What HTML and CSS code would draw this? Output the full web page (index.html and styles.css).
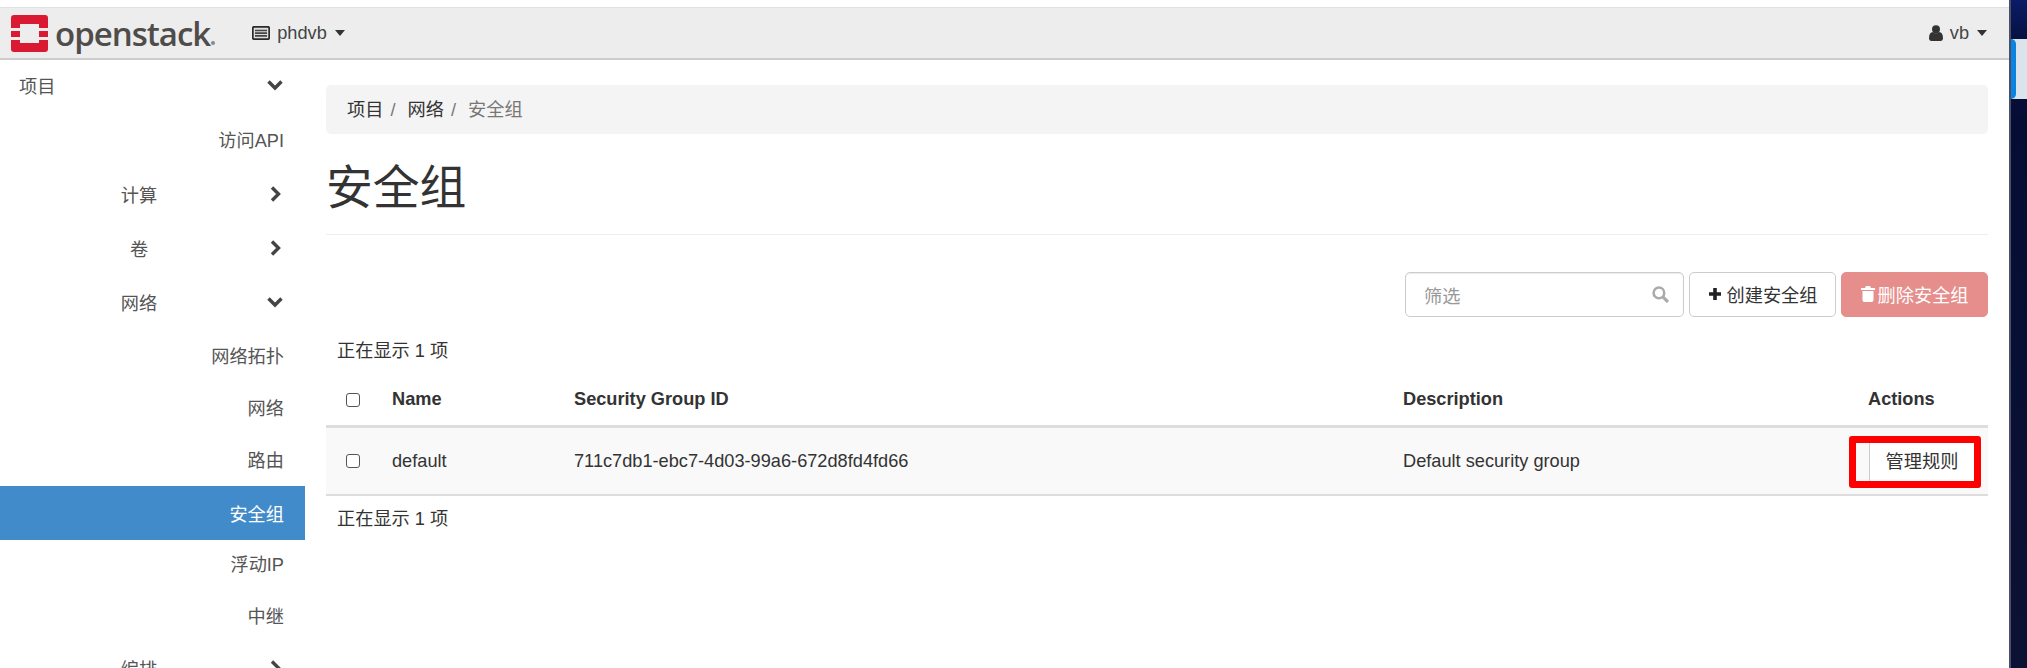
FILE: index.html
```html
<!DOCTYPE html>
<html lang="zh-CN">
<head>
    <meta charset="UTF-8">
    <meta name="viewport" content="width=device-width, initial-scale=1.0">
    <title>安全组 - OpenStack</title>
    <link rel="stylesheet" href="styles.css">
</head>
<body>

    <div class="window">
        <!-- Barra superior -->
        <header class="navbar">
            <a class="brand">
                <svg class="brand-mark" viewBox="0 0 37 37">
                    <path fill="#da1a32" d="M3 0h31a3 3 0 0 1 3 3v10H28V9H9v4H0V3a3 3 0 0 1 3-3zM0 16h9v6H0zM28 16h9v6H28zM0 25h9v3h19v-3h9v9a3 3 0 0 1-3 3H3a3 3 0 0 1-3-3z"/>
                </svg>
                <span class="brand-name">openstack</span><span class="brand-dot"></span>
            </a>
            <a class="project-menu">
                <svg class="project-icon" viewBox="0 0 18 14">
                    <rect x="0.8" y="0.8" width="16.4" height="12.4" rx="1.5" fill="#ddd" stroke="#2b2b2b" stroke-width="1.8"/>
                    <path d="M3 4.500h12M3 7.200h12M3 9.900h12" stroke="#444" stroke-width="1.700"/>
                </svg>
                phdvb<span class="caret"></span>
            </a>
            <a class="user-menu">
                <svg class="user-icon" viewBox="0 0 14 16">
                    <circle cx="7" cy="4.200" r="4" fill="#333"/>
                    <path fill="#333" d="M0 13c0-4 1.500-6 4-6 1 .8 2 1.200 3 1.200s2-.4 3-1.200c2.500 0 4 2 4 6 0 2-1 3-2.500 3h-9C1 16 0 15 0 13z"/>
                </svg>
                vb<span class="caret"></span>
            </a>
        </header>

        <div class="layout">
            <!-- Menu lateral -->
            <nav class="sidebar">
                <a class="nav-group nav-top"><span class="nav-label">项目</span>
                    <svg class="chevron" viewBox="0 0 18 12"><path d="M2.500 2.500 9 9l6.500-6.500" /></svg>
                </a>
                <a class="nav-item nav-first">访问API</a>
                <a class="nav-group"><span class="nav-label">计算</span>
                    <svg class="chevron" viewBox="0 0 18 18"><path d="M6 2.500 12.500 9 6 15.500" /></svg>
                </a>
                <a class="nav-group"><span class="nav-label">卷</span>
                    <svg class="chevron" viewBox="0 0 18 18"><path d="M6 2.500 12.500 9 6 15.500" /></svg>
                </a>
                <a class="nav-group"><span class="nav-label">网络</span>
                    <svg class="chevron" viewBox="0 0 18 12"><path d="M2.500 2.500 9 9l6.500-6.500" /></svg>
                </a>
                <a class="nav-item">网络拓扑</a>
                <a class="nav-item">网络</a>
                <a class="nav-item">路由</a>
                <a class="nav-item active">安全组</a>
                <a class="nav-item">浮动IP</a>
                <a class="nav-item">中继</a>
                <a class="nav-group nav-last"><span class="nav-label">编排</span>
                    <svg class="chevron" viewBox="0 0 18 18"><path d="M6 2.500 12.500 9 6 15.500" /></svg>
                </a>
            </nav>

            <main class="content">
                <div class="breadcrumb">
                    <a>项目</a><span class="sep">/</span>
                    <a>网络</a><span class="sep">/</span>
                    <span class="current">安全组</span>
                </div>

                <div class="page-header">
                    <h1>安全组</h1>
                </div>

                <div class="toolbar">
                    <div class="filter">
                        <span class="filter-text">筛选</span>
                        <svg class="search-icon" viewBox="0 0 16 16">
                            <circle cx="6.500" cy="6.500" r="5" fill="none" stroke="#aaa" stroke-width="2.400"/>
                            <path d="M10.500 10.500 15 15" stroke="#aaa" stroke-width="3"/>
                        </svg>
                    </div>
                    <button class="btn">
                        <svg class="plus-icon" viewBox="0 0 14 14"><path d="M7 1v12M1 7h12" stroke="#222" stroke-width="3.600"/></svg>
                        创建安全组
                    </button>
                    <button class="btn btn-danger">
                        <svg class="trash-icon" viewBox="0 0 14 16">
                            <path fill="#fff" d="M5 0h4l1 2h4v2H0V2h4zM1.500 5h11v9a2 2 0 0 1-2 2h-7a2 2 0 0 1-2-2z"/>
                        </svg>
                        删除安全组
                    </button>
                </div>

                <div class="summary summary-top">正在显示 1 项</div>

                <table class="groups">
                    <colgroup>
                        <col class="col-check">
                        <col class="col-name">
                        <col class="col-id">
                        <col class="col-desc">
                        <col class="col-actions">
                    </colgroup>
                    <thead>
                        <tr>
                            <th class="check-cell"><span class="checkbox"></span></th>
                            <th>Name</th>
                            <th>Security Group ID</th>
                            <th>Description</th>
                            <th>Actions</th>
                        </tr>
                    </thead>
                    <tbody>
                        <tr>
                            <td class="check-cell"><span class="checkbox"></span></td>
                            <td>default</td>
                            <td>711c7db1-ebc7-4d03-99a6-672d8fd4fd66</td>
                            <td>Default security group</td>
                            <td class="actions-cell">
                                <button class="btn btn-rules">管理规则</button>
                                <span class="highlight"></span>
                            </td>
                        </tr>
                    </tbody>
                </table>

                <div class="summary">正在显示 1 项</div>
            </main>
        </div>
    </div>

    <!-- Fundo da área de trabalho -->
    <aside class="desktop">
        <div class="desktop-panel"><span class="panel-tab"></span></div>
    </aside>

</body>
</html>
```

FILE: styles.css
```css
html, body {
    height: 100%;
}
body {
    margin: 0;
    display: flex;
    height: 668px;
    overflow: hidden;
    background-color: #fff;
    color: #333;
    font-family: "Liberation Sans", "Noto Sans CJK SC", sans-serif;
    font-size: 18.2px;
}
.window {
    flex: 1;
    min-width: 0;
    padding-top: 7px;
    overflow: hidden;
}

/* navbar */
.navbar {
    display: flex;
    align-items: center;
    height: 50px;
    background-color: #ededed;
    border-top: 1px solid #e2e2e2;
    border-bottom: 2px solid #ccc;
    color: #444;
}
.brand {
    display: flex;
    align-items: center;
    padding-left: 11px;
}
.brand-mark {
    width: 37px;
    height: 37px;
}
.brand-name {
    margin-left: 7px;
    font-family: "Open Sans", sans-serif;
    font-size: 33px;
    font-weight: 600;
    letter-spacing: -1px;
    color: #4f4c4a;
    line-height: 37px;
}
.brand-dot {
    width: 4px;
    height: 4px;
    margin: 20px 0 0 1px;
    border-radius: 50%;
    background-color: #888;
}
.project-menu {
    display: flex;
    align-items: center;
    margin-left: 37px;
}
.project-icon {
    width: 18px;
    height: 14px;
    margin-right: 7px;
}
.user-menu {
    display: flex;
    align-items: center;
    margin-left: auto;
    padding-right: 22px;
}
.user-icon {
    width: 14px;
    height: 16px;
    margin-right: 7px;
}
.caret {
    width: 0;
    height: 0;
    margin-left: 8px;
    border-top: 6px solid #333;
    border-left: 5.500px solid transparent;
    border-right: 5.500px solid transparent;
}

/* sidebar */
.layout {
    display: flex;
}
.sidebar {
    width: 305px;
    flex-shrink: 0;
    height: 608px;
    overflow: hidden;
    color: #555;
}
.nav-group, .nav-item {
    display: flex;
    align-items: center;
    box-sizing: border-box;
}
.nav-group {
    height: 54px;
    padding: 0 21px 0 12px;
}
.nav-top {
    height: 50px;
    margin-bottom: 1px;
    padding-left: 19px;
}
.nav-top .nav-label {
    text-align: left;
}
.nav-label {
    flex: 1;
    text-align: center;
}
.chevron {
    width: 18px;
    height: 18px;
    fill: none;
    stroke: #444;
    stroke-width: 3.400;
}
.nav-item {
    height: 52px;
    justify-content: flex-end;
    padding-right: 21px;
}
.nav-item.nav-first {
    height: 56px;
}
.nav-item.active {
    height: 54px;
    margin-top: 1px;
    margin-bottom: -3px;
    background-color: #428bca;
    color: #fff;
}

/* conteudo */
.content {
    flex: 1;
    min-width: 0;
    padding: 25px 21px 0;
}
.breadcrumb {
    height: 49px;
    line-height: 51px;
    padding-left: 21px;
    background-color: #f4f4f4;
    border-radius: 5px;
}
.breadcrumb .sep {
    margin: 0 7px 0 7px;
    color: #777;
}
.breadcrumb .current {
    color: #777;
}
.page-header {
    display: flex;
    align-items: center;
    height: 99px;
    padding-bottom: 1px;
    border-bottom: 1px solid #eee;
}
h1 {
    margin: 0;
    font-size: 46.800px;
    font-weight: 400;
}
.toolbar {
    display: flex;
    justify-content: flex-end;
    gap: 5px;
    margin-top: 37px;
    height: 45px;
}
.filter {
    display: flex;
    align-items: center;
    justify-content: space-between;
    box-sizing: border-box;
    width: 279px;
    padding: 0 14px 0 18px;
    background-color: #fff;
    border: 1px solid #ccc;
    border-radius: 5px;
    box-shadow: inset 0 1px 1px rgba(0, 0, 0, 0.08);
}
.filter-text {
    color: #999;
}
.search-icon {
    width: 17px;
    height: 17px;
}
.btn {
    display: flex;
    align-items: center;
    justify-content: center;
    box-sizing: border-box;
    width: 147px;
    padding: 0 0 2px;
    background-color: #fff;
    border: 1px solid #ccc;
    border-radius: 5px;
    color: #333;
    font-family: inherit;
    font-size: 18.2px;
}
.plus-icon {
    width: 14px;
    height: 14px;
    margin-right: 5px;
}
.btn-danger {
    background-color: #e58e8c;
    border-color: #e58e8c;
    color: #fff;
}
.trash-icon {
    width: 14px;
    height: 16px;
    margin-right: 3px;
}
.summary {
    height: 26px;
    line-height: 26px;
    padding-left: 11px;
    margin-top: 10px;
}
.summary-top {
    margin-top: 21px;
}

/* tabela */
.groups {
    width: 100%;
    margin-top: 9px;
    table-layout: fixed;
    border-collapse: collapse;
}
.col-check { width: 58px; }
.col-name { width: 182px; }
.col-id { width: 829px; }
.col-desc { width: 465px; }
.col-actions { width: 128px; }
th, td {
    padding: 0 0 0 8px;
    text-align: left;
}
th {
    height: 53px;
    padding-top: 2px;
    box-sizing: border-box;
    border-bottom: 3px solid #ddd;
    font-weight: 700;
}
td {
    height: 65px;
    padding-top: 1px;
    background-color: #f9f9f9;
    border-bottom: 2px solid #ddd;
}
.check-cell {
    padding-left: 20px;
}
.checkbox {
    display: block;
    box-sizing: border-box;
    width: 14px;
    height: 14px;
    background-color: #fff;
    border: 1.500px solid #555;
    border-radius: 3px;
}
.actions-cell {
    position: relative;
    padding: 0;
}
.btn-rules {
    width: 106px;
    height: 46px;
    margin-left: 9px;
}
.highlight {
    position: absolute;
    left: -11px;
    top: 8px;
    box-sizing: border-box;
    width: 132px;
    height: 52px;
    border: 7px solid #f00;
    border-radius: 3px;
}

/* lado direito */
.desktop {
    width: 18px;
    flex-shrink: 0;
    padding-top: 39px;
    box-sizing: border-box;
    background: linear-gradient(#0b1c66 0, #071040 40px, #060d35 120px, #0b1233 100%);
    border-left: 2px solid #4a4f68;
}
.desktop-panel {
    display: flex;
    height: 60px;
    background-color: #dbe4ea;
}
.panel-tab {
    width: 5px;
    background-color: #0a84e0;
    border-radius: 0 6px 6px 0;
}
```
